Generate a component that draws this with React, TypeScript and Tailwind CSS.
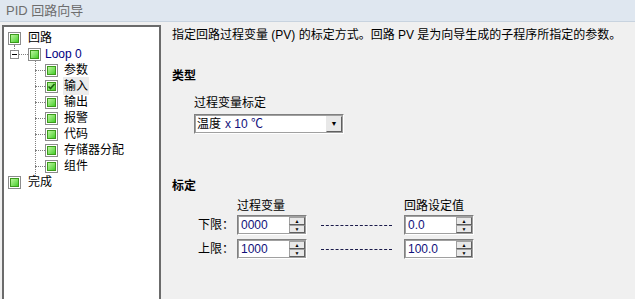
import React from "react";

const FONT = { fontFamily: "'Liberation Sans', 'Noto Sans CJK SC', sans-serif" };

const NodeIcon = ({ checked = false }: { checked?: boolean }) => (
  <span className="inline-flex h-[13px] w-[13px] shrink-0 items-center justify-center border border-[#8c8c8c] bg-white">
    <span className="relative flex h-[9px] w-[9px] items-center justify-center border border-[#3c9a1c] bg-gradient-to-br from-[#b8f59a] to-[#3fcf1f]">
      {checked && (
        <svg width="9" height="9" viewBox="0 0 9 9" className="absolute">
          <path d="M1.5 4.5 L3.5 6.5 L7.5 2" stroke="#1b5e10" strokeWidth="1.6" fill="none" />
        </svg>
      )}
    </span>
  </span>
);

const children = ["参数", "输入", "输出", "报警", "代码", "存储器分配", "组件"];

const Spin = ({ value }: { value: string }) => (
  <div className="flex h-[20px] w-[70px] border border-t-[#808080] border-l-[#808080] border-b-white border-r-white bg-[#a0a0a0] p-[1px]">
    <div className="flex flex-1 items-center bg-white pl-[2px] text-[12px] text-[#10107a]">{value}</div>
    <div className="flex w-[16px] flex-col bg-white">
      <div className="flex h-[8px] items-center justify-center border border-[#a0a0a0] bg-[#e8e8e8] border-b-[#606060] border-r-[#606060]">
        <span className="text-[5px] leading-none text-black">▲</span>
      </div>
      <div className="flex h-[8px] items-center justify-center border border-[#a0a0a0] bg-[#e8e8e8] border-b-[#606060] border-r-[#606060]">
        <span className="text-[5px] leading-none text-black">▼</span>
      </div>
    </div>
  </div>
);

const Dashes = () => <div className="h-0 w-[71px] border-t border-dashed border-[#1a1a4a]" />;

export default function App() {
  return (
    <div className="flex h-[299px] w-[635px] flex-col overflow-hidden bg-[#f0f0f0] text-[12px] text-black" style={FONT}>
      <div className="flex h-[22px] items-center border-b border-[#c8d3df] bg-[#dfe7f0] pl-[6px] text-[13px] text-[#6e6e6e]">
        PID 回路向导
      </div>
      <div className="flex flex-1 pt-[3px]">
        <div className="relative ml-[2px] h-full w-[159px] border-l-2 border-t-2 border-r-2 border-[#6b6b6b] bg-white pt-[3px]">
          <span className="absolute left-[10px] top-[18px] h-[6px] border-l border-dotted border-[#808080]" />
          <span className="absolute left-[31px] top-[34px] h-[115px] border-l border-dotted border-[#808080]" />
          <div className="flex h-[16px] items-center gap-[7px] pl-[4px]">
            <NodeIcon />
            <span>回路</span>
          </div>
          <div className="flex h-[16px] items-center pl-[6px]">
            <span className="flex h-[9px] w-[9px] items-center justify-center border border-[#8c8c8c] bg-white">
              <span className="h-px w-[5px] bg-black" />
            </span>
            <span className="w-[9px] border-t border-dotted border-[#808080]" />
            <NodeIcon />
            <span className="ml-[4px] text-[#000080]">Loop 0</span>
          </div>
          {children.map((c, i) => (
            <div key={c} className="flex h-[16px] items-center pl-[31px]">
              <span className="w-[10px] border-t border-dotted border-[#808080]" />
              <NodeIcon checked={i === 1} />
              <span className={`ml-[5px] px-[1px] ${i === 1 ? "bg-[#ececec]" : ""}`}>{c}</span>
            </div>
          ))}
          <div className="flex h-[16px] items-center gap-[7px] pl-[4px]">
            <NodeIcon />
            <span>完成</span>
          </div>
        </div>
        <div className="flex-1 pl-[11px] pt-[1px]">
          <div>指定回路过程变量 (PV) 的标定方式。回路 PV 是为向导生成的子程序所指定的参数。</div>
          <div className="mt-[23px] font-bold">类型</div>
          <div className="ml-[22px] mt-[9px]">过程变量标定</div>
          <div className="ml-[22px] mt-[2px] flex h-[20px] w-[150px] border border-t-[#808080] border-l-[#808080] border-b-white border-r-white bg-[#a0a0a0] p-[1px]">
            <div className="flex flex-1 items-center bg-white pl-[1px]">
              温度 <span className="ml-1 text-[#10107a]">x 10 ℃</span>
            </div>
            <div className="flex w-[16px] items-center justify-center border border-[#e8e8e8] border-b-[#606060] border-r-[#606060] bg-[#e8e8e8] text-[7px]">
              ▼
            </div>
          </div>
          <div className="mt-[43px] font-bold">标定</div>
          <div className="mt-[4px] flex">
            <div className="flex w-[65px] flex-col items-end gap-[4px] pr-[3px] pt-[16px]">
              <div className="flex h-[20px] items-center">下限：</div>
              <div className="flex h-[20px] items-center">上限：</div>
            </div>
            <div className="flex flex-col gap-[4px]">
              <div className="-mb-[2px] h-[14px] leading-[14px]">过程变量</div>
              <Spin value="0000" />
              <Spin value="1000" />
            </div>
            <div className="flex flex-col gap-[4px] pl-[14px] pr-[12px] pt-[16px]">
              <div className="flex h-[20px] items-center"><Dashes /></div>
              <div className="flex h-[20px] items-center"><Dashes /></div>
            </div>
            <div className="flex flex-col gap-[4px]">
              <div className="-mb-[2px] h-[14px] leading-[14px]">回路设定值</div>
              <Spin value="0.0" />
              <Spin value="100.0" />
            </div>
          </div>
        </div>
      </div>
    </div>
  );
}
